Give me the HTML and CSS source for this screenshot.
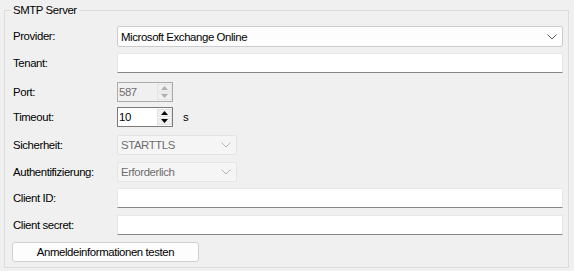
FILE: index.html
```html
<!DOCTYPE html>
<html>
<head>
<meta charset="utf-8">
<link rel="stylesheet" href="styles.css">
</head>
<body>
<fieldset class="group">
  <legend class="group-title">SMTP Server</legend>
  <div class="form">
    <div class="lbl">Provider:</div>
    <div class="combo combo-wide">
      <span class="combo-text">Microsoft Exchange Online</span>
      <svg class="chev" width="10" height="6" viewBox="0 0 10 6"><path d="M0.5 0.5 L5 5 L9.5 0.5" fill="none" stroke="#5a5a5a" stroke-width="1"/></svg>
    </div>

    <div class="lbl">Tenant:</div>
    <div class="text-field"></div>

    <div class="lbl">Port:</div>
    <div class="num num-disabled">
      <span class="num-text">587</span>
      <div class="spin">
        <div class="spin-btn"><svg width="7" height="4" viewBox="0 0 7 4"><path d="M0 4 L3.5 0 L7 4 Z" fill="#b0b0b0"/></svg></div>
        <div class="spin-btn"><svg width="7" height="4" viewBox="0 0 7 4"><path d="M0 0 L3.5 4 L7 0 Z" fill="#b0b0b0"/></svg></div>
      </div>
    </div>

    <div class="lbl">Timeout:</div>
    <div class="num-row">
      <div class="num">
        <span class="num-text num-text-active">10</span>
        <div class="spin">
          <div class="spin-btn"><svg width="7" height="4" viewBox="0 0 7 4"><path d="M0 4 L3.5 0 L7 4 Z" fill="#000"/></svg></div>
          <div class="spin-btn"><svg width="7" height="4" viewBox="0 0 7 4"><path d="M0 0 L3.5 4 L7 0 Z" fill="#000"/></svg></div>
        </div>
      </div>
      <span class="unit">s</span>
    </div>

    <div class="lbl">Sicherheit:</div>
    <div class="combo combo-disabled">
      <span class="combo-text">STARTTLS</span>
      <svg class="chev" width="10" height="6" viewBox="0 0 10 6"><path d="M0.5 0.5 L5 5 L9.5 0.5" fill="none" stroke="#b4b4b4" stroke-width="1"/></svg>
    </div>

    <div class="lbl">Authentifizierung:</div>
    <div class="combo combo-disabled">
      <span class="combo-text">Erforderlich</span>
      <svg class="chev" width="10" height="6" viewBox="0 0 10 6"><path d="M0.5 0.5 L5 5 L9.5 0.5" fill="none" stroke="#b4b4b4" stroke-width="1"/></svg>
    </div>

    <div class="lbl">Client ID:</div>
    <div class="text-field"></div>

    <div class="lbl">Client secret:</div>
    <div class="text-field"></div>
  </div>
  <button class="btn">Anmeldeinformationen testen</button>
</fieldset>
</body>
</html>
```
FILE: styles.css
```css
html, body {
  margin: 0;
  padding: 0;
  background: #f0f0f0;
}
body {
  font-family: "Liberation Sans", Arial, sans-serif;
  font-size: 11.4px;
  letter-spacing: -0.4px;
  color: #000;
  padding: 3px 0 0 4px;
}
.group {
  box-sizing: border-box;
  width: 565px;
  height: 265px;
  margin: 0;
  padding: 9px 5px 0 8px;
  border: 1px solid #dcdcdc;
  min-inline-size: 0;
}
.group-title {
  padding: 0 2px;
  margin-left: -2px;
  line-height: 14px;
  color: #000;
}
.form {
  display: grid;
  grid-template-columns: 104px 1fr;
  grid-template-rows: 27px 29px 25px 28px 27px 26px 27px 27px;
}
.lbl {
  height: 20px;
  line-height: 20px;
  align-self: start;
  white-space: nowrap;
}
.combo {
  box-sizing: border-box;
  height: 20px;
  display: flex;
  align-items: center;
  justify-content: space-between;
  padding: 0 5px 0 3px;
  border: 1px solid #cccccc;
  border-radius: 2px;
  background: #fdfdfd;
}
.combo-wide {
  height: 21px;
}
.combo-disabled {
  width: 120px;
  background: #f5f5f5;
  border-color: #e4e4e4;
  color: #6d6d6d;
}
.combo-text {
  white-space: nowrap;
}
.chev {
  display: block;
}
.text-field {
  box-sizing: border-box;
  height: 20px;
  background: #ffffff;
  border: 1px solid #e8e8e8;
  border-bottom: 1px solid #868686;
}
.num-row {
  display: flex;
  align-items: center;
  gap: 10px;
  height: 20px;
}
.num {
  box-sizing: border-box;
  width: 56px;
  height: 20px;
  display: flex;
  align-items: stretch;
  justify-content: space-between;
  border: 1px solid #7a7a7a;
  background: #ffffff;
}
.num-disabled {
  border-color: #acacac;
  background: #f0f0f0;
  color: #6d6d6d;
}
.num-text {
  line-height: 18px;
  padding-left: 1px;
}
.spin {
  width: 15px;
  display: flex;
  flex-direction: column;
  gap: 1px;
  padding: 1px 0;
}
.spin-btn {
  flex: 1;
  display: flex;
  align-items: center;
  justify-content: center;
  background: #f0f0f0;
  border: 1px solid #e2e2e2;
  box-sizing: border-box;
}
.num-disabled .spin-btn {
  border-color: #e4e4e4;
}
.unit {
  line-height: 20px;
}
.btn {
  box-sizing: border-box;
  margin-left: -1px;
  width: 187px;
  height: 20px;
  padding: 0;
  font: inherit;
  letter-spacing: inherit;
  color: #000;
  background: #fdfdfd;
  border: 1px solid #d0d0d0;
  border-radius: 3px;
}
```
